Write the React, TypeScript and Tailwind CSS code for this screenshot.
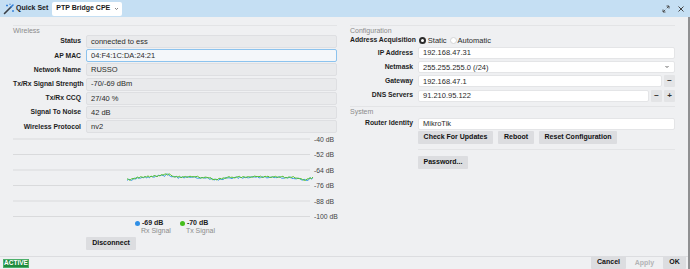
import React from "react";

function rnd(i: number) {
  const s = Math.sin(i * 12.9898 + 4.1) * 43758.5453;
  return s - Math.floor(s);
}

const KEY: [number, number][] = [
  [114, 45], [118, 45.5], [122, 44], [128, 43], [140, 42], [150, 41.5], [155, 40], [158, 41.5],
  [165, 43], [180, 43], [195, 43.5], [200, 45], [203, 46], [208, 45], [214, 43.5], [240, 42.5],
  [270, 43], [286, 43.5], [290, 45.5], [294, 46], [297, 44], [300, 44],
];

function baseY(x: number) {
  for (let i = 0; i < KEY.length - 1; i++) {
    const [x0, y0] = KEY[i];
    const [x1, y1] = KEY[i + 1];
    if (x >= x0 && x <= x1) return y0 + ((y1 - y0) * (x - x0)) / (x1 - x0);
  }
  return 44;
}

function series(seed: number, off: number) {
  const pts: string[] = [];
  let i = 0;
  for (let x = 114; x <= 300; x += 1.5) {
    const y = baseY(x) + off + (rnd(i * 3 + seed) - 0.5) * 1.9;
    pts.push(`${x.toFixed(1)},${y.toFixed(2)}`);
    i++;
  }
  return pts.join(" ");
}

const GRID = [
  { y: 5, t: "-40 dB" },
  { y: 20.5, t: "-52 dB" },
  { y: 36, t: "-64 dB" },
  { y: 51.5, t: "-76 dB" },
  { y: 67, t: "-88 dB" },
  { y: 82.5, t: "-100 dB" },
];

function Field({ children, variant = "ro" }: { children: React.ReactNode; variant?: "ro" | "focus" }) {
  const cls =
    variant === "focus"
      ? "bg-[#f4f7fa] border-[#8cc3ee]"
      : "bg-[#e9eaec] border-[#dedfe2]";
  return (
    <div className={`h-[13px] w-[251px] border rounded-[2px] flex items-center px-[4px] text-[7.5px] text-[#2a2a2a] ${cls}`}>
      {children}
    </div>
  );
}

function LeftRow({ label, value, focus }: { label: string; value: string; focus?: boolean }) {
  return (
    <div className="flex items-center gap-[5px]">
      <div className="w-[68px] text-right font-bold text-[6.8px] text-[#1d1d1d] whitespace-nowrap">{label}</div>
      <Field variant={focus ? "focus" : "ro"}>{value}</Field>
    </div>
  );
}

function Btn({ children, className = "" }: { children: React.ReactNode; className?: string }) {
  return (
    <div className={`h-[13px] bg-[#dcdde0] rounded-[1px] flex items-center justify-center font-bold text-[7px] text-[#111] ${className}`}>
      {children}
    </div>
  );
}

function SmallBtn({ children }: { children: React.ReactNode }) {
  return (
    <div className="w-[11px] h-[12px] bg-[#e3e4e6] rounded-[1px] flex items-center justify-center text-[8px] font-bold text-[#333]">
      {children}
    </div>
  );
}

function RightRow({ label, children }: { label: string; children: React.ReactNode }) {
  return (
    <div className="flex items-center gap-[5px] h-[12px]">
      <div className="w-[63px] text-right font-bold text-[6.8px] text-[#1d1d1d] whitespace-nowrap">{label}</div>
      <div className="flex-1 flex items-center gap-[2px] h-full">{children}</div>
    </div>
  );
}

function Input({ children, chevron }: { children?: React.ReactNode; chevron?: boolean }) {
  return (
    <div className="flex-1 h-[12px] bg-white border border-[#e4e5e7] rounded-[2px] flex items-center px-[4px] text-[7.5px] text-[#2a2a2a]">
      <span className="flex-1">{children}</span>
      {chevron && (
        <svg width="6" height="4" viewBox="0 0 6 4">
          <path d="M1.5 1 L3 2.5 L4.5 1" stroke="#555" strokeWidth="0.9" fill="none" />
        </svg>
      )}
    </div>
  );
}

export default function App() {
  return (
    <div className="w-[690px] h-[269px] flex flex-col bg-[#eff0f2] overflow-hidden font-['Liberation_Sans',Arial,sans-serif]">
      {/* Title bar */}
      <div className="h-[17px] bg-[#c5dff3] flex items-center pl-[3px] pr-[5px]">
        <svg width="12" height="12" viewBox="0 0 12 12">
          <path d="M1.5 10.5 L8 4" stroke="#3a3f46" strokeWidth="1.6" strokeLinecap="round" />
          <path d="M8 4 L10 2" stroke="#2f7ed8" strokeWidth="1.6" strokeLinecap="round" />
          <path d="M4 1.5 L4 3.5 M3 2.5 L5 2.5" stroke="#2f7ed8" strokeWidth="0.9" />
          <path d="M10 7 L10 9 M9 8 L11 8" stroke="#2f7ed8" strokeWidth="0.9" />
          <path d="M7 0.8 L7 1.8 M6.5 1.3 L7.5 1.3" stroke="#2f7ed8" strokeWidth="0.7" />
        </svg>
        <span className="ml-[1px] font-bold text-[7px] text-[#1a1a1a]">Quick Set</span>
        <div className="ml-[4px] h-[14px] w-[70px] bg-white rounded-[2px] flex items-center pl-[4px] pr-[3px]">
          <span className="flex-1 font-bold text-[7px] text-[#1a1a1a]">PTP Bridge CPE</span>
          <svg width="5" height="4" viewBox="0 0 5 4">
            <path d="M1 1 L2.5 2.5 L4 1" stroke="#666" strokeWidth="0.8" fill="none" />
          </svg>
        </div>
        <div className="flex-1" />
        <svg width="8" height="8" viewBox="0 0 8 8" className="mr-[7px]">
          <path d="M4.5 1 L7 1 L7 3.5 M7 1 L4.8 3.2" stroke="#444" strokeWidth="0.9" fill="none" />
          <path d="M3.5 7 L1 7 L1 4.5 M1 7 L3.2 4.8" stroke="#444" strokeWidth="0.9" fill="none" />
        </svg>
        <svg width="8" height="8" viewBox="0 0 8 8">
          <path d="M1.5 1.5 L6.5 6.5 M6.5 1.5 L1.5 6.5" stroke="#444" strokeWidth="1" />
        </svg>
      </div>

      <div className="flex-1 flex flex-col border-r-2 border-[#8f9092]">
        {/* Body */}
        <div className="flex-1 flex">
          {/* Left column */}
          <div className="w-[345px] pl-[13px] pr-[8px] pt-[8px] flex flex-col">
            <div className="border-t border-[#e3e4e6]" />
            <div className="h-[9px] leading-[9px] text-[7px] text-[#8b8b8b]">Wireless</div>
            <div className="flex flex-col gap-[1.2px]">
              <LeftRow label="Status" value="connected to ess" />
              <LeftRow label="AP MAC" value="04:F4:1C:DA:24:21" focus />
              <LeftRow label="Network Name" value="RUSSO" />
              <LeftRow label="Tx/Rx Signal Strength" value="-70/-69 dBm" />
              <LeftRow label="Tx/Rx CCQ" value="27/40 %" />
              <LeftRow label="Signal To Noise" value="42 dB" />
              <LeftRow label="Wireless Protocol" value="nv2" />
            </div>
            <svg width="330" height="85" viewBox="0 0 330 85" className="mt-[1px] block overflow-visible">
              {GRID.map((g) => (
                <g key={g.t}>
                  <line x1="0" x2="297" y1={g.y} y2={g.y} stroke="#d9dadc" strokeWidth="1" />
                  <text x="301" y={g.y + 2.5} fontSize="6.8" fill="#444" fontFamily="Liberation Sans, Arial, sans-serif">
                    {g.t}
                  </text>
                </g>
              ))}
              <polyline points={series(7, 0.5)} fill="none" stroke="#3a9be8" strokeWidth="1" />
              <polyline points={series(1, 0)} fill="none" stroke="#55c22a" strokeWidth="1" />
            </svg>
            <div className="flex justify-center gap-[9px] h-[16px]">
              <div className="flex flex-col">
                <div className="flex items-center h-[8px] gap-[2px]">
                  <span className="w-[5px] h-[5px] rounded-full bg-[#2f8fe6]" />
                  <span className="font-bold text-[7px] text-[#222]">-69 dB</span>
                </div>
                <div className="h-[8px] leading-[8px] pl-[6px] text-[7px] text-[#8d8d8d]">Rx Signal</div>
              </div>
              <div className="flex flex-col">
                <div className="flex items-center h-[8px] gap-[2px]">
                  <span className="w-[5px] h-[5px] rounded-full bg-[#45bd1c]" />
                  <span className="font-bold text-[7px] text-[#222]">-70 dB</span>
                </div>
                <div className="h-[8px] leading-[8px] pl-[6px] text-[7px] text-[#8d8d8d]">Tx Signal</div>
              </div>
            </div>
            <div className="mt-[2px] ml-[73px]">
              <Btn className="w-[50px]">Disconnect</Btn>
            </div>
          </div>

          {/* Right column */}
          <div className="w-[343px] pl-[5px] pr-[13px] pt-[8px] flex flex-col">
            <div className="border-t border-[#e3e4e6]" />
            <div className="h-[9px] leading-[9px] text-[7px] text-[#8b8b8b]">Configuration</div>
            <div className="flex items-center h-[11px]">
              <div className="font-bold text-[6.8px] text-[#1d1d1d] whitespace-nowrap">Address Acquisition</div>
              <div className="ml-[3px] flex items-center text-[7.5px] text-[#2a2a2a]">
                <span className="w-[7px] h-[7px] rounded-full border-[2px] border-[#2b2b2b] bg-white" />
                <span className="ml-[2px]">Static</span>
                <span className="ml-[3px] w-[7px] h-[7px] rounded-full border border-[#d4d5d7] bg-white" />
                <span className="ml-[1px]">Automatic</span>
              </div>
            </div>
            <div className="mt-[1px] flex flex-col gap-[2.2px]">
              <RightRow label="IP Address">
                <Input>192.168.47.31</Input>
              </RightRow>
              <RightRow label="Netmask">
                <Input chevron>255.255.255.0 (/24)</Input>
              </RightRow>
              <RightRow label="Gateway">
                <Input>192.168.47.1</Input>
                <SmallBtn>−</SmallBtn>
              </RightRow>
              <RightRow label="DNS Servers">
                <Input>91.210.95.122</Input>
                <SmallBtn>−</SmallBtn>
                <SmallBtn>+</SmallBtn>
              </RightRow>
            </div>
            <div className="mt-[4.5px] border-t border-[#e3e4e6]" />
            <div className="h-[9px] leading-[9px] text-[7px] text-[#8b8b8b]">System</div>
            <div className="mt-[1.5px]">
              <RightRow label="Router Identity">
                <Input>MikroTik</Input>
              </RightRow>
            </div>
            <div className="mt-[1.5px] ml-[68px] flex gap-[5px]">
              <Btn className="w-[75px]">Check For Updates</Btn>
              <Btn className="w-[36px]">Reboot</Btn>
              <Btn className="w-[78px]">Reset Configuration</Btn>
            </div>
            <div className="mt-[4.5px] ml-[68px] border-t border-[#e3e4e6]" />
            <div className="mt-[6.5px] ml-[68px]">
              <Btn className="w-[50px] h-[12px]">Password...</Btn>
            </div>
          </div>
        </div>

        {/* Footer */}
        <div className="h-[13px] border-t border-[#dcdde0] flex items-center pl-[3px] pr-[2px]">
          <div className="h-[9px] w-[26px] bg-[#1f8c3f] border border-[#4caf6a] flex items-center justify-center text-[6.5px] font-bold text-white">
            ACTIVE
          </div>
          <div className="flex-1" />
          <div className="flex items-end h-full gap-[1px]">
            <Btn className="w-[35px] h-[12px]">Cancel</Btn>
            <div className="w-[35px] h-[12px] flex items-center justify-center font-bold text-[7px] text-[#b3b4b6]">Apply</div>
            <Btn className="w-[23px] h-[12px]">OK</Btn>
          </div>
        </div>
      </div>
    </div>
  );
}
